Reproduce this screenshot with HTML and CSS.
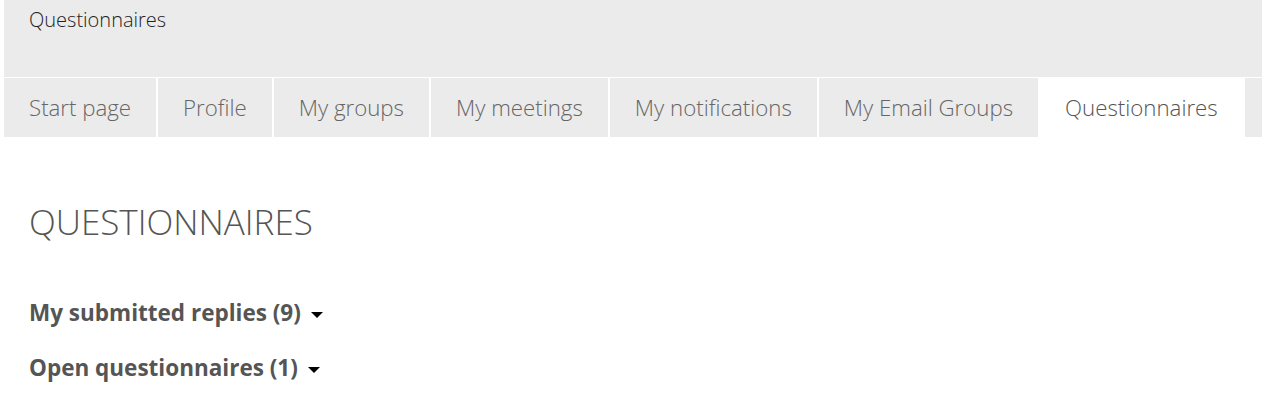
FILE: index.html
```html
<!DOCTYPE html>
<html>
<head>
<meta charset="utf-8">
<link rel="stylesheet" href="styles.css">
</head>
<body>
<div class="page">
  <header class="top">
    <div class="title">Questionnaires</div>
  </header>
  <nav class="tabs">
    <a class="tab">Start page</a>
    <a class="tab">Profile</a>
    <a class="tab">My groups</a>
    <a class="tab">My meetings</a>
    <a class="tab">My notifications</a>
    <a class="tab">My Email Groups</a>
    <a class="tab active">Questionnaires</a>
    <span class="tab-fill"></span>
  </nav>
  <main class="content">
    <h1 class="heading">QUESTIONNAIRES</h1>
    <div class="section">My submitted replies (9) <span class="caret"></span></div>
    <div class="section">Open questionnaires (1) <span class="caret"></span></div>
  </main>
</div>
</body>
</html>
```
FILE: styles.css
```css
html, body {
  margin: 0;
  padding: 0;
  background: #fff;
}
body {
  font-family: "Open Sans", sans-serif;
  color: #555;
}
.page {
  padding-left: 4px;
}
.top {
  background: #ebebeb;
  height: 77px;
  border-bottom: 1px solid #fff;
}
.title {
  padding: 7px 0 0 25px;
  font-size: 20px;
  font-weight: 300;
  color: #222;
  line-height: 26px;
}
.tabs {
  display: flex;
  height: 59px;
  background: #ebebeb;
}
.tab {
  display: flex;
  align-items: center;
  padding: 0 25px 1px;
  font-size: 22.25px;
  font-weight: 300;
  color: #666;
  border-right: 2px solid #fff;
  white-space: nowrap;
}
.tab.active {
  background: #fff;
  color: #555;
}
.tab-fill {
  flex: 1;
}
.content {
  padding: 62px 0 0 25px;
}
.heading {
  margin: 0;
  font-size: 35px;
  font-weight: 300;
  color: #555;
  line-height: 46px;
}
.section {
  font-size: 22.5px;
  font-weight: 700;
  color: #555;
  margin-top: 53px;
  line-height: 30px;
}
.section + .section {
  margin-top: 25px;
}
.caret {
  display: inline-block;
  width: 0;
  height: 0;
  border-left: 6px solid transparent;
  border-right: 6px solid transparent;
  border-top: 6px solid #000;
  vertical-align: middle;
  margin-left: 4px;
}
```
